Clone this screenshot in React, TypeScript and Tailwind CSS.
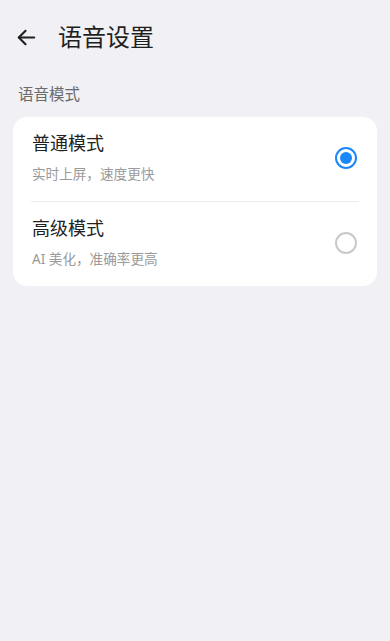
import { useState } from "react"

const modes = [
  { id: "normal", title: "普通模式", desc: "实时上屏，速度更快" },
  { id: "advanced", title: "高级模式", desc: "AI 美化，准确率更高" },
]

export default function App() {
  const [mode, setMode] = useState("normal")

  return (
    <div
      className="min-h-[641px] w-[390px] bg-[#f0f0f5]"
      style={{ fontFamily: '"Noto Sans", "Noto Sans CJK SC", sans-serif' }}
    >
      <div className="flex h-[74px] items-center pl-[15px]">
        <svg width="23" height="23" viewBox="0 0 24 24" fill="none" stroke="#1f1f1f" strokeWidth="2.2" strokeLinecap="round" strokeLinejoin="round">
          <path d="M20 12H4" />
          <path d="M11 5l-7 7 7 7" />
        </svg>
        <h1 className="ml-[20px] text-[24px] leading-[30px] text-[#1f1f1f]">语音设置</h1>
      </div>

      <p className="mt-[10px] px-[18px] text-[15.5px] leading-[20px] text-[#6b6b6b]">语音模式</p>

      <div className="mx-[13px] mt-[13px] rounded-[14px] bg-white">
        {modes.map((m, i) => (
          <div key={m.id}>
            {i > 0 && <div className="mx-[18px] h-px bg-[#ebebeb]" />}
            <button
              onClick={() => setMode(m.id)}
              className="flex w-full items-center justify-between pl-[19px] pr-[20px] pt-[15px] pb-[17px] text-left"
            >
              <div>
                <p className="text-[18px] leading-[22px] text-[#222]">{m.title}</p>
                <p className="mt-[10px] text-[13.6px] leading-[20px] text-[#9a9a9a]">{m.desc}</p>
              </div>
              {mode === m.id ? (
                <span className="flex h-[22px] w-[22px] items-center justify-center rounded-full border-2 border-[#1a88f8]">
                  <span className="h-[12px] w-[12px] rounded-full bg-[#1a88f8]" />
                </span>
              ) : (
                <span className="h-[22px] w-[22px] rounded-full border-2 border-[#c9c9c9]" />
              )}
            </button>
          </div>
        ))}
      </div>
    </div>
  )
}
